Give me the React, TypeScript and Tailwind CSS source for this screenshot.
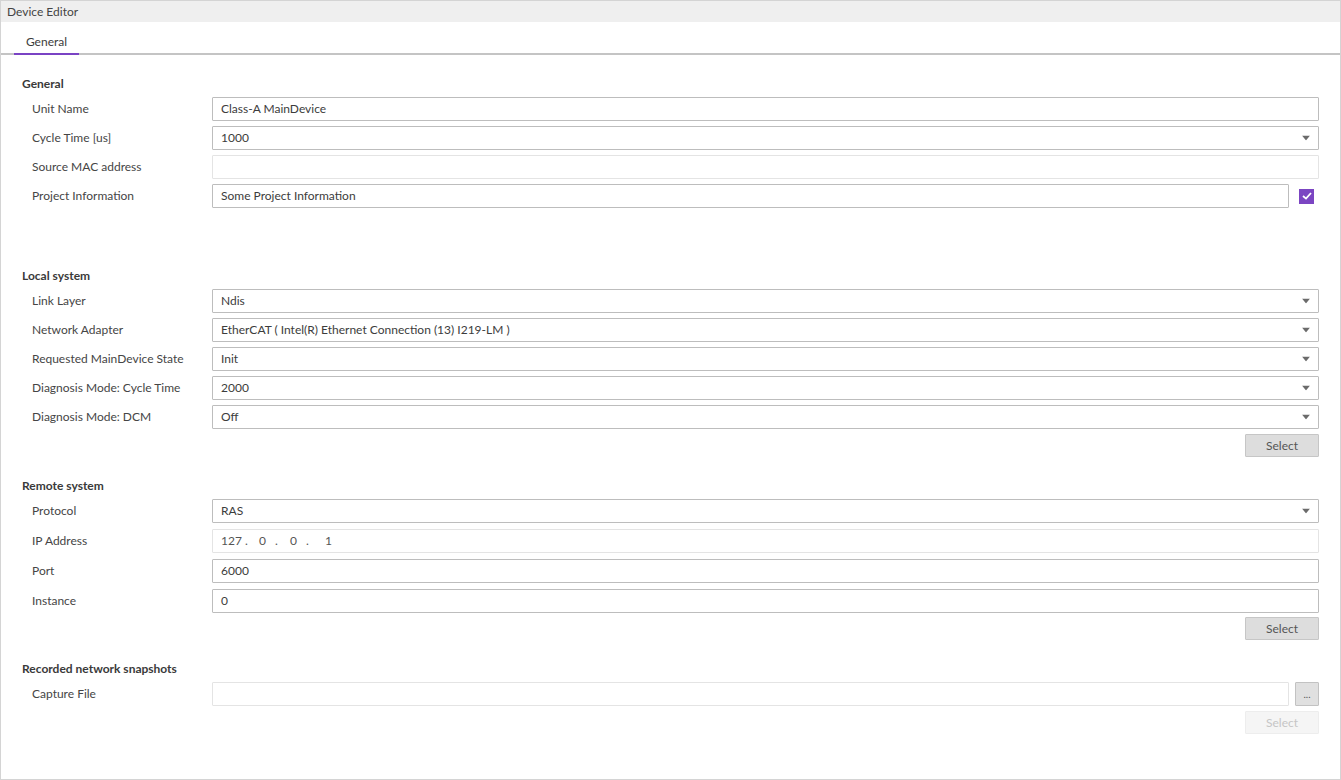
import type { ReactNode } from "react";

const FONT = { fontFamily: "Lato, 'Noto Sans', sans-serif" };

function Caret() {
  return (
    <svg width="8" height="5" viewBox="0 0 8 5" className="absolute right-[8px] top-1/2 -translate-y-1/2">
      <path d="M0 0 L8 0 L4 5 Z" fill="#6b6b6b" />
    </svg>
  );
}

type FieldProps = {
  value?: string;
  select?: boolean;
  muted?: boolean;
  children?: ReactNode;
};

function Field({ value = "", select, muted, children }: FieldProps) {
  return (
    <div
      className={
        "relative flex h-[24px] flex-1 items-center rounded-[1px] border bg-white px-[8px] text-[12px] text-[#3c3c3c] " +
        (muted ? "border-[#e4e4e4]" : "border-[#bdbdbd]")
      }
    >
      {children ?? value}
      {select ? <Caret /> : null}
    </div>
  );
}

function Row({ label, children }: { label: string; children: ReactNode }) {
  return (
    <div className="flex h-[24px] items-center">
      <div className="w-[190px] shrink-0 pl-[10px] text-[12px] text-[#454545]">{label}</div>
      {children}
    </div>
  );
}

function Heading({ children }: { children: ReactNode }) {
  return <div className="h-[16px] text-[12px] font-bold leading-[16px] text-[#3a3a3a]">{children}</div>;
}

function SelectButton({ disabled }: { disabled?: boolean }) {
  return (
    <div className="flex justify-end">
      <button
        type="button"
        className={
          "h-[23px] w-[74px] rounded-[1px] border text-[12px] " +
          (disabled
            ? "border-[#ededed] bg-[#f5f5f5] text-[#c6c6c6]"
            : "border-[#c6c6c6] bg-[#dddddd] text-[#555555]")
        }
      >
        Select
      </button>
    </div>
  );
}

export default function App() {
  return (
    <div style={FONT} className="flex h-[780px] w-[1341px] flex-col border border-[#d4d4d4] bg-white">
      <div className="flex h-[21px] shrink-0 items-center bg-[#efefef] pl-[6px] text-[12px] text-[#444]">
        Device Editor
      </div>

      <div className="flex h-[33px] shrink-0 items-end border-b-2 border-[#c4c4c4] pl-[13px]">
        <div className="relative flex h-[31px] w-[65px] items-center justify-center pt-[8px] text-[12px] text-[#3c3c3c]">
          General
          <div className="absolute bottom-[-2px] left-0 right-0 h-[2px] bg-[#7a43c4]" />
        </div>
      </div>

      <div className="flex flex-col px-[21px] pt-[21px]">
        <Heading>General</Heading>
        <div className="mt-[5px] flex flex-col gap-[5px]">
          <Row label="Unit Name">
            <Field value="Class-A MainDevice" />
          </Row>
          <Row label="Cycle Time [us]">
            <Field value="1000" select />
          </Row>
          <Row label="Source MAC address">
            <Field muted />
          </Row>
          <Row label="Project Information">
            <Field value="Some Project Information" />
            <div className="flex w-[30px] shrink-0 justify-end pr-[5px]">
              <div className="flex h-[15px] w-[15px] items-center justify-center bg-[#7b45c2]">
                <svg width="10" height="8" viewBox="0 0 10 8">
                  <path d="M1 4 L4 6.6 L9 1" fill="none" stroke="white" strokeWidth="1.8" />
                </svg>
              </div>
            </div>
          </Row>
        </div>

        <div className="mt-[60px]">
          <Heading>Local system</Heading>
        </div>
        <div className="mt-[5px] flex flex-col gap-[5px]">
          <Row label="Link Layer">
            <Field value="Ndis" select />
          </Row>
          <Row label="Network Adapter">
            <Field value="EtherCAT ( Intel(R) Ethernet Connection (13) I219-LM )" select />
          </Row>
          <Row label="Requested MainDevice State">
            <Field value="Init" select />
          </Row>
          <Row label="Diagnosis Mode: Cycle Time">
            <Field value="2000" select />
          </Row>
          <Row label="Diagnosis Mode: DCM">
            <Field value="Off" select />
          </Row>
        </div>
        <div className="mt-[5px]">
          <SelectButton />
        </div>

        <div className="mt-[21px]">
          <Heading>Remote system</Heading>
        </div>
        <div className="mt-[5px] flex flex-col gap-[6px]">
          <Row label="Protocol">
            <Field value="RAS" select />
          </Row>
          <Row label="IP Address">
            <Field muted>
              <div className="flex items-center text-[#555]">
                <span className="w-[24px]">127</span>
                <span className="w-[14px]">.</span>
                <span className="w-[16px]">0</span>
                <span className="w-[15px]">.</span>
                <span className="w-[16px]">0</span>
                <span className="w-[19px]">.</span>
                <span>1</span>
              </div>
            </Field>
          </Row>
          <Row label="Port">
            <Field value="6000" />
          </Row>
          <Row label="Instance">
            <Field value="0" />
          </Row>
        </div>
        <div className="mt-[4px]">
          <SelectButton />
        </div>

        <div className="mt-[21px]">
          <Heading>Recorded network snapshots</Heading>
        </div>
        <div className="mt-[5px]">
          <Row label="Capture File">
            <Field muted />
            <div className="ml-[6px] flex h-[24px] w-[24px] shrink-0 items-center justify-center rounded-[1px] border border-[#c2c2c2] bg-[#e0e0e0] text-[10px] leading-none text-[#555]">
              ...
            </div>
          </Row>
        </div>
        <div className="mt-[5px]">
          <SelectButton disabled />
        </div>
      </div>
    </div>
  );
}
